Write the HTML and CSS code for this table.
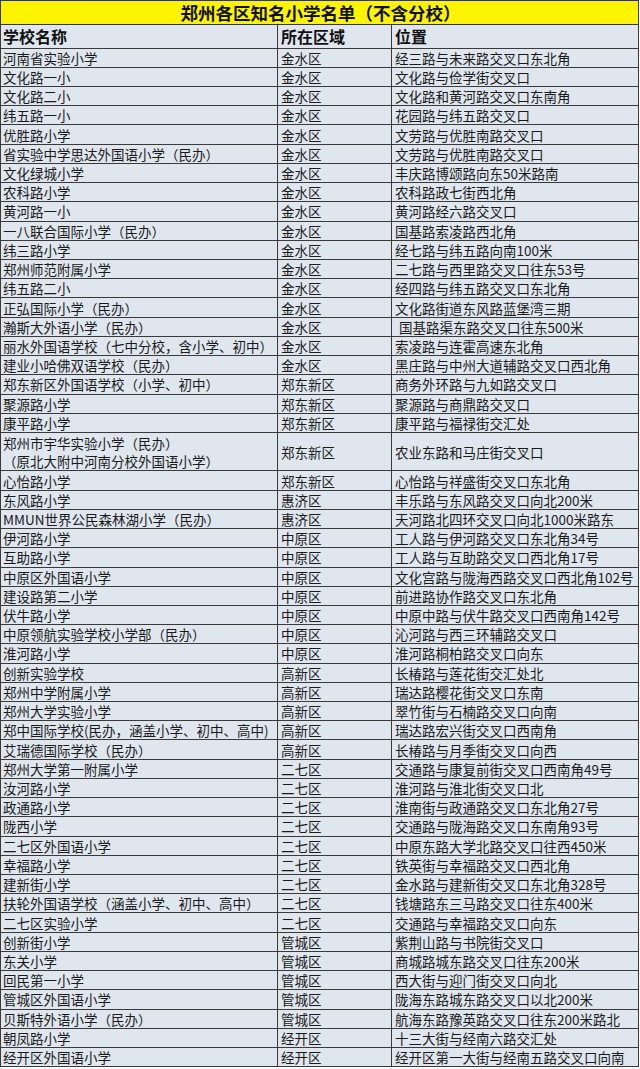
FILE: index.html
```html
<!DOCTYPE html>
<html lang="zh-CN">
<head>
<meta charset="utf-8">
<title>郑州各区知名小学名单</title>
<link rel="stylesheet" href="styles.css">
</head>
<body>
<div class="sheet">
  <div class="title">郑州各区知名小学名单（不含分校）</div>
  <div class="c h">学校名称</div><div class="c h">所在区域</div><div class="c h">位置</div>
  <div class="c">河南省实验小学</div><div class="c">金水区</div><div class="c">经三路与未来路交叉口东北角</div>
  <div class="c">文化路一小</div><div class="c">金水区</div><div class="c">文化路与俭学街交叉口</div>
  <div class="c">文化路二小</div><div class="c">金水区</div><div class="c">文化路和黄河路交叉口东南角</div>
  <div class="c">纬五路一小</div><div class="c">金水区</div><div class="c">花园路与纬五路交叉口</div>
  <div class="c">优胜路小学</div><div class="c">金水区</div><div class="c">文劳路与优胜南路交叉口</div>
  <div class="c">省实验中学思达外国语小学（民办）</div><div class="c">金水区</div><div class="c">文劳路与优胜南路交叉口</div>
  <div class="c">文化绿城小学</div><div class="c">金水区</div><div class="c">丰庆路博颂路向东50米路南</div>
  <div class="c">农科路小学</div><div class="c">金水区</div><div class="c">农科路政七街西北角</div>
  <div class="c">黄河路一小</div><div class="c">金水区</div><div class="c">黄河路经六路交叉口</div>
  <div class="c">一八联合国际小学（民办）</div><div class="c">金水区</div><div class="c">国基路索凌路西北角</div>
  <div class="c">纬三路小学</div><div class="c">金水区</div><div class="c">经七路与纬五路向南100米</div>
  <div class="c">郑州师范附属小学</div><div class="c">金水区</div><div class="c">二七路与西里路交叉口往东53号</div>
  <div class="c">纬五路二小</div><div class="c">金水区</div><div class="c">经四路与纬五路交叉口东北角</div>
  <div class="c">正弘国际小学（民办）</div><div class="c">金水区</div><div class="c">文化路街道东风路蓝堡湾三期</div>
  <div class="c">瀚斯大外语小学（民办）</div><div class="c">金水区</div><div class="c indent">国基路渠东路交叉口往东500米</div>
  <div class="c">丽水外国语学校（七中分校，含小学、初中）</div><div class="c">金水区</div><div class="c">索凌路与连霍高速东北角</div>
  <div class="c">建业小哈佛双语学校（民办）</div><div class="c">金水区</div><div class="c">黑庄路与中州大道辅路交叉口西北角</div>
  <div class="c">郑东新区外国语学校（小学、初中）</div><div class="c">郑东新区</div><div class="c">商务外环路与九如路交叉口</div>
  <div class="c">聚源路小学</div><div class="c">郑东新区</div><div class="c">聚源路与商鼎路交叉口</div>
  <div class="c">康平路小学</div><div class="c">郑东新区</div><div class="c">康平路与福禄街交汇处</div>
  <div class="c tall">郑州市宇华实验小学（民办）<br>（原北大附中河南分校外国语小学）</div><div class="c tall">郑东新区</div><div class="c tall">农业东路和马庄街交叉口</div>
  <div class="c">心怡路小学</div><div class="c">郑东新区</div><div class="c">心怡路与祥盛街交叉口东北角</div>
  <div class="c">东风路小学</div><div class="c">惠济区</div><div class="c">丰乐路与东风路交叉口向北200米</div>
  <div class="c">MMUN世界公民森林湖小学（民办）</div><div class="c">惠济区</div><div class="c">天河路北四环交叉口向北1000米路东</div>
  <div class="c">伊河路小学</div><div class="c">中原区</div><div class="c">工人路与伊河路交叉口东北角34号</div>
  <div class="c">互助路小学</div><div class="c">中原区</div><div class="c">工人路与互助路交叉口西北角17号</div>
  <div class="c">中原区外国语小学</div><div class="c">中原区</div><div class="c">文化宫路与陇海西路交叉口西北角102号</div>
  <div class="c">建设路第二小学</div><div class="c">中原区</div><div class="c">前进路协作路交叉口东北角</div>
  <div class="c">伏牛路小学</div><div class="c">中原区</div><div class="c">中原中路与伏牛路交叉口西南角142号</div>
  <div class="c">中原领航实验学校小学部（民办）</div><div class="c">中原区</div><div class="c">沁河路与西三环辅路交叉口</div>
  <div class="c">淮河路小学</div><div class="c">中原区</div><div class="c">淮河路桐柏路交叉口向东</div>
  <div class="c">创新实验学校</div><div class="c">高新区</div><div class="c">长椿路与莲花街交汇处北</div>
  <div class="c">郑州中学附属小学</div><div class="c">高新区</div><div class="c">瑞达路樱花街交叉口东南</div>
  <div class="c">郑州大学实验小学</div><div class="c">高新区</div><div class="c">翠竹街与石楠路交叉口向南</div>
  <div class="c">郑中国际学校(民办，涵盖小学、初中、高中)</div><div class="c">高新区</div><div class="c">瑞达路宏兴街交叉口西南角</div>
  <div class="c">艾瑞德国际学校（民办）</div><div class="c">高新区</div><div class="c">长椿路与月季街交叉口向西</div>
  <div class="c">郑州大学第一附属小学</div><div class="c">二七区</div><div class="c">交通路与康复前街交叉口西南角49号</div>
  <div class="c">汝河路小学</div><div class="c">二七区</div><div class="c">淮河路与淮北街交叉口北</div>
  <div class="c">政通路小学</div><div class="c">二七区</div><div class="c">淮南街与政通路交叉口东北角27号</div>
  <div class="c">陇西小学</div><div class="c">二七区</div><div class="c">交通路与陇海路交叉口东南角93号</div>
  <div class="c">二七区外国语小学</div><div class="c">二七区</div><div class="c">中原东路大学北路交叉口往西450米</div>
  <div class="c">幸福路小学</div><div class="c">二七区</div><div class="c">铁英街与幸福路交叉口西北角</div>
  <div class="c">建新街小学</div><div class="c">二七区</div><div class="c">金水路与建新街交叉口东北角328号</div>
  <div class="c">扶轮外国语学校（涵盖小学、初中、高中）</div><div class="c">二七区</div><div class="c">钱塘路东三马路交叉口往东400米</div>
  <div class="c">二七区实验小学</div><div class="c">二七区</div><div class="c">交通路与幸福路交叉口向东</div>
  <div class="c">创新街小学</div><div class="c">管城区</div><div class="c">紫荆山路与书院街交叉口</div>
  <div class="c">东关小学</div><div class="c">管城区</div><div class="c">商城路城东路交叉口往东200米</div>
  <div class="c">回民第一小学</div><div class="c">管城区</div><div class="c">西大街与迎门街交叉口向北</div>
  <div class="c">管城区外国语小学</div><div class="c">管城区</div><div class="c">陇海东路城东路交叉口以北200米</div>
  <div class="c">贝斯特外语小学（民办）</div><div class="c">管城区</div><div class="c">航海东路豫英路交叉口往东200米路北</div>
  <div class="c">朝凤路小学</div><div class="c">经开区</div><div class="c">十三大街与经南六路交汇处</div>
  <div class="c">经开区外国语小学</div><div class="c">经开区</div><div class="c">经开区第一大街与经南五路交叉口向南</div>
</div>
</body>
</html>
```

FILE: styles.css
```css
html, body {
  margin: 0;
  padding: 0;
  background: #ffffff;
}

.sheet {
  width: 637px;
  display: grid;
  grid-template-columns: 276px 113px 1fr;
  grid-template-rows: 23px 22.6px;
  grid-auto-rows: 18.23px;
  gap: 1px;
  background: #3a3a3a;
  border: 1px solid #3a3a3a;
  font-family: "Noto Sans CJK SC", "Noto Sans", sans-serif;
  color: #1a1a1a;
}

.title {
  grid-column: 1 / -1;
  background: #fdf400;
  display: flex;
  align-items: center;
  justify-content: center;
  font-size: 17.5px;
  font-weight: 700;
  line-height: 1;
  color: #111;
  padding-left: 2px;
}

.c {
  background: #dfe6ee;
  display: flex;
  align-items: center;
  padding-left: 3px;
  font-size: 13.5px;
  line-height: 18px;
  white-space: nowrap;
  overflow: hidden;
}

.sheet > .c:nth-child(3n+2) {
  padding-left: 2px;
}

.h {
  font-size: 16px;
  font-weight: 700;
  color: #111;
}

.tall {
  grid-row: span 2;
}

.indent {
  padding-left: 7px;
}
```
